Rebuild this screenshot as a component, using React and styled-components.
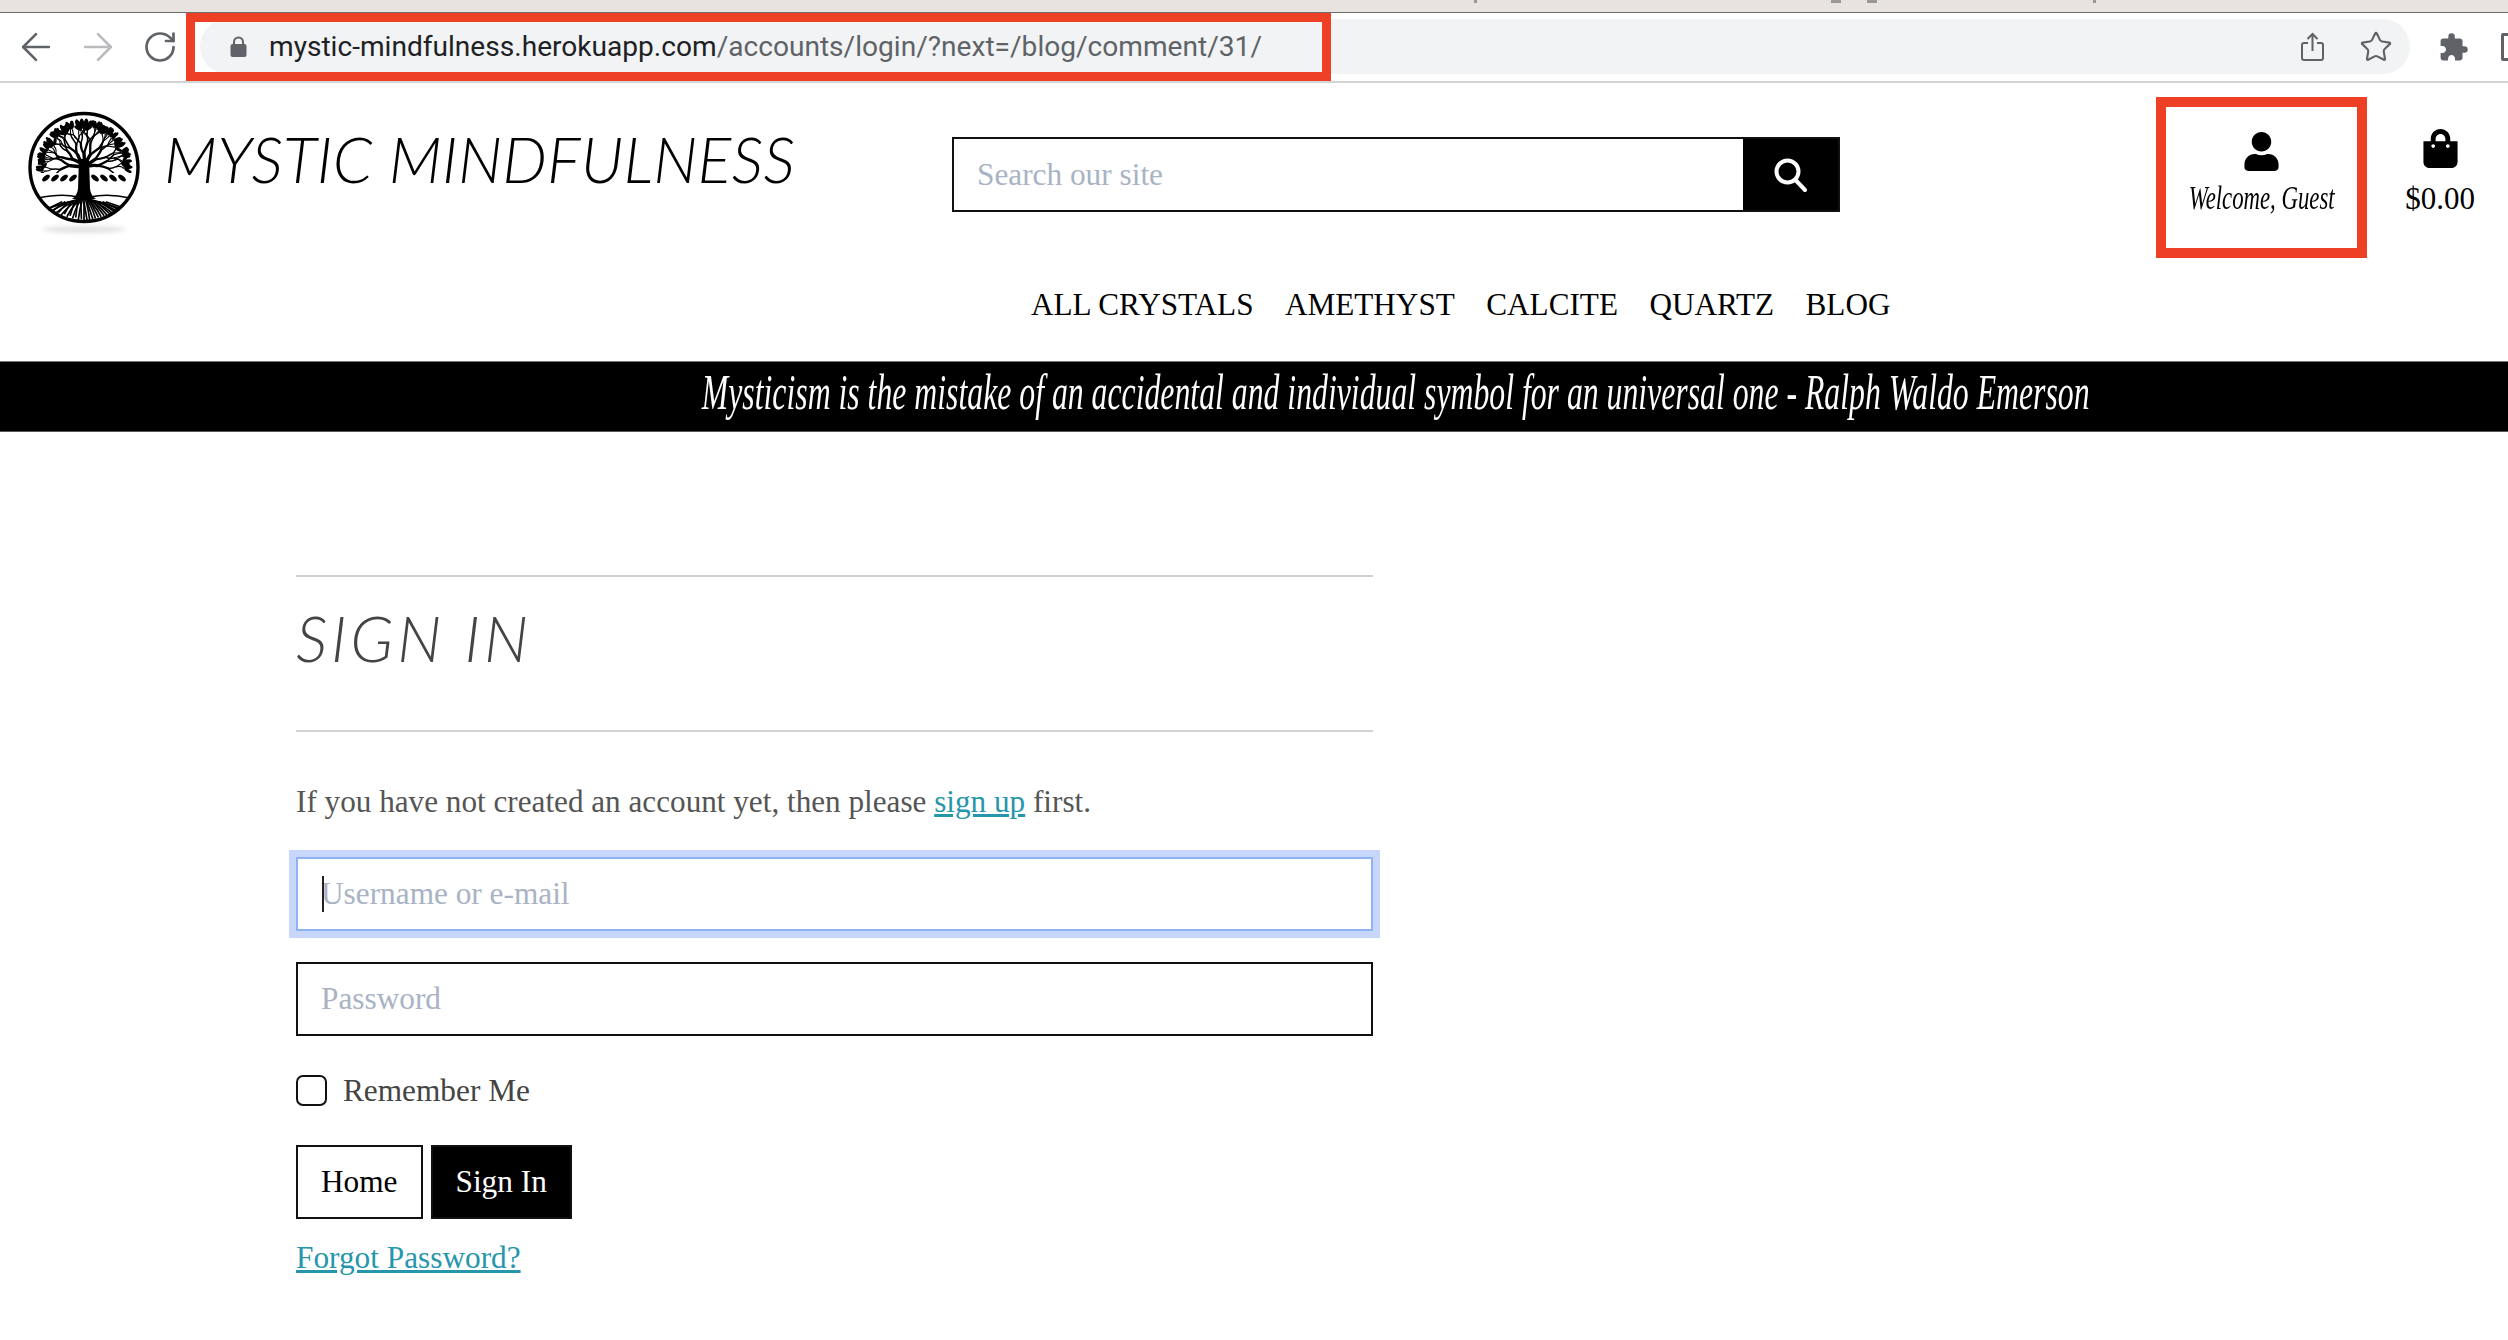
import React from 'react'
import styled, { createGlobalStyle } from 'styled-components'
import { ArrowLeft, ArrowRight, RotateCw, Star } from 'lucide-react'
import { FaShoppingBag, FaUser } from 'react-icons/fa'
import { MdExtension } from 'react-icons/md'

const RED = '#ee4024'
const SERIF = '"Liberation Serif", "Times New Roman", serif'

const GlobalStyle = createGlobalStyle`
  html, body {
    margin: 0;
    padding: 0;
    background: #fff;
    overflow: hidden;
  }

  * {
    box-sizing: border-box;
  }

  input::placeholder {
    color: #a8b3c4;
    opacity: 1;
  }
`

const Page = styled.div`
  width: 2508px;
  height: 1340px;
  overflow: hidden;
  font-family: ${SERIF};
  color: #000;
`

const TabStrip = styled.div`
  display: flex;
  height: 13px;
  background: #e7e4df;
  border-bottom: 1px solid #6f6e6a;
`

// the only thing left of the page title above the crop is a few descenders
const TitleScrap = styled.span`
  width: ${props => props.$width}px;
  height: 3px;
  margin-left: ${props => props.$left}px;
  background: #9a9894;
`

const Toolbar = styled.div`
  position: relative;
  display: flex;
  align-items: center;
  height: 70px;
  padding-left: 22px;
  background: #fff;
  border-bottom: 2px solid #d4d4d4;
`

const NavIcons = styled.div`
  display: flex;
  align-items: center;
  gap: 34px;
  width: 178px;
  flex-shrink: 0;
`

const NavIcon = styled.span`
  display: flex;
  justify-content: center;
  width: 28px;
  color: ${props => (props.$disabled ? '#b8babd' : '#5f6368')};

  svg {
    flex-shrink: 0;
  }
`

const Omnibox = styled.div`
  display: flex;
  align-items: center;
  width: 2210px;
  height: 55px;
  flex-shrink: 0;
  margin-bottom: 1px;
  padding: 0 17px 0 30px;
  background: #f1f3f4;
  border-radius: 28px;
`

const LockIcon = styled.svg`
  width: 17px;
  height: 21px;
  margin-right: 22px;
  flex-shrink: 0;
`

const Url = styled.div`
  flex: 1;
  font: 28.1px 'Roboto', sans-serif;
  color: #5f6368;
  white-space: nowrap;
`

const UrlHost = styled.span`
  color: #202124;
`

const OmniAction = styled.span`
  display: flex;
  margin-left: 35px;
  color: #5f6368;
`

const UrlHighlight = styled.div`
  position: absolute;
  top: 0;
  left: 186px;
  width: 1145px;
  height: 68px;
  border: 9px solid ${RED};
  pointer-events: none;
`

const Extensions = styled.span`
  display: flex;
  flex-shrink: 0;
  margin-left: 28px;
  color: #5f6368;
`

const SidePanelIcon = styled.span`
  width: 16px;
  height: 28px;
  margin-left: 32px;
  flex-shrink: 0;
  border: 3px solid #5f6368;
  border-radius: 2px;
`

const Header = styled.header`
  display: flex;
  height: 181px;
`

const Brand = styled.a`
  display: flex;
  align-items: flex-start;
  width: 952px;
  padding: 28px 0 0 28px;
  color: #000;
`

const LogoWrap = styled.div`
  position: relative;
  width: 112px;
  height: 113px;
  flex-shrink: 0;

  &::after {
    content: '';
    position: absolute;
    left: 14px;
    right: 14px;
    bottom: -9px;
    height: 7px;
    border-radius: 50%;
    background: #e2e2e2;
    filter: blur(2px);
  }
`

const BrandName = styled.div`
  margin: 15px 0 0 24px;
  font-family: 'Lato', sans-serif;
  font-style: italic;
  font-weight: 300;
  font-size: 63px;
  line-height: 66px;
  letter-spacing: 0.25px;
  white-space: nowrap;
`

const SearchForm = styled.form`
  display: flex;
  width: 888px;
  height: 75px;
  margin-top: 54px;
  border: 2px solid #111;
`

const SearchInput = styled.input`
  flex: 1;
  min-width: 0;
  padding: 0 23px;
  border: 0;
  outline: 0;
  font: 31.3px ${SERIF};
`

const SearchButton = styled.button`
  display: flex;
  align-items: center;
  justify-content: center;
  width: 95px;
  padding: 0;
  border: 0;
  background: #000;
  color: #fff;
`

const AccountBox = styled.div`
  display: flex;
  flex-direction: column;
  align-items: center;
  width: 211px;
  height: 161px;
  margin: 14px 0 0 316px;
  padding-top: 25px;
  border: 10px solid ${RED};
`

const AccountLabel = styled.div`
  margin-top: 8px;
  font-style: italic;
  font-size: 33px;
  line-height: 38px;
  white-space: nowrap;
  transform: scaleX(0.69);
`

const Cart = styled.div`
  display: flex;
  flex: 1;
  flex-direction: column;
  align-items: center;
  padding: 46px 0 0 5px;
`

const CartTotal = styled.div`
  margin-top: 13px;
  font-size: 31px;
  line-height: 36px;
`

const Nav = styled.nav`
  display: flex;
  gap: 31.5px;
  height: 97px;
  padding: 20px 0 0 1031px;
`

const NavLink = styled.a`
  font-size: 31.2px;
  line-height: 42px;
  color: #000;
  white-space: nowrap;
`

const Banner = styled.div`
  display: flex;
  justify-content: center;
  height: 71px;
  padding: 0 0 0 284px;
  background: #000;
  border-top: 1px solid #777;
  border-bottom: 1px solid #555;
  overflow: hidden;
`

const Quote = styled.div`
  font-style: italic;
  font-size: 50px;
  line-height: 60px;
  color: #fff;
  white-space: nowrap;
  transform: scaleX(0.635);
`

const Main = styled.main`
  width: 1077px;
  margin: 143px 0 0 296px;
`

const Rule = styled.hr`
  height: 2px;
  margin: 0;
  border: 0;
  background: #d2d2d2;
`

const Title = styled.h1`
  height: 153px;
  margin: 0;
  padding-top: 25px;
  font-family: 'Lato', sans-serif;
  font-style: italic;
  font-weight: 300;
  font-size: 63px;
  line-height: 72px;
  letter-spacing: 3.7px;
  color: #444;
`

const Intro = styled.p`
  margin: 51px 0 0;
  font-size: 31.2px;
  line-height: 38px;
  color: #555;
`

const TextLink = styled.a`
  color: #2596ab;
  text-decoration: underline;
`

const Field = styled.div`
  position: relative;
  margin-top: ${props => props.$top}px;
`

const TextInput = styled.input`
  display: block;
  width: 100%;
  height: 74px;
  padding: 0 23px;
  border: 2px solid ${props => (props.$focused ? '#8fb2f5' : '#111')};
  border-radius: 0;
  outline: 0;
  box-shadow: ${props => (props.$focused ? '0 0 0 7px #c9d6fb' : 'none')};
  font: 31.3px ${SERIF};
`

const Caret = styled.span`
  position: absolute;
  top: 19px;
  left: 26px;
  width: 1.5px;
  height: 36px;
  background: #222;
`

const RememberRow = styled.label`
  display: flex;
  align-items: center;
  gap: 16px;
  margin-top: 39px;
  font-size: 31.3px;
  line-height: 31px;
  color: #444;
`

const CheckBox = styled.span`
  width: 31px;
  height: 31px;
  border: 2px solid #111;
  border-radius: 7px;
`

const Actions = styled.div`
  display: flex;
  gap: 8px;
  margin-top: 39px;
`

const ActionButton = styled.button`
  height: 74px;
  padding: 0 23px;
  border: 2px solid #111;
  border-radius: 0;
  background: ${props => (props.$primary ? '#000' : '#fff')};
  color: ${props => (props.$primary ? '#fff' : '#000')};
  font: 31.3px ${SERIF};
`

const ForgotRow = styled.div`
  margin-top: 20px;
  font-size: 31.3px;
  line-height: 38px;
`

// deterministic branching, so the crown looks hand cut but never changes between renders
const buildCrown = () => {
  const branches = []
  const leaves = []

  const grow = (x, y, angle, length, width, depth, seed) => {
    const x2 = x + Math.cos(angle) * length
    const y2 = y + Math.sin(angle) * length
    const bend = ((seed * 7) % 5 - 2) * 0.8
    branches.push({
      d: `M${x} ${y}Q${(x + x2) / 2 + bend} ${(y + y2) / 2 - bend} ${x2} ${y2}`,
      width,
    })
    if (depth === 0) {
      leaves.push({ x: x2, y: y2, angle: (angle * 180) / Math.PI })
      return
    }
    const spread = 0.3 + ((seed * 3) % 4) * 0.05
    grow(x2, y2, angle - spread, length * 0.8, width * 0.68, depth - 1, seed + 1)
    grow(x2, y2, angle + spread, length * 0.8, width * 0.68, depth - 1, seed + 2)
  }

  const limbs = [-3.05, -2.55, -2.05, -1.57, -1.1, -0.6, -0.1]
  limbs.forEach((angle, i) => {
    grow(56, 56, angle, 13.5, 3.4, 4, i + 1)
  })

  return { branches, leaves }
}

const buildRoots = () => {
  const roots = []
  for (let i = -7; i <= 7; i += 1) {
    const endX = 56 + i * 5.6
    const endY = 110 - Math.abs(i) * 1.6
    roots.push(`M56 ${86 + Math.abs(i) * 0.2}Q${56 + i * 3.2} ${90 + Math.abs(i) * 0.3} ${endX} ${endY}`)
    roots.push(`M${56 + i * 3.2} ${91}L${endX + 3} ${endY - 1}`)
  }
  return roots
}

const crown = buildCrown()
const roots = buildRoots()
const lowerLeaves = [18, 27, 36, 45, 67, 76, 85, 94]

const TreeLogo = () => (
  <svg width="112" height="113" viewBox="0 0 112 113">
    <defs>
      <clipPath id="logo-circle">
        <circle cx="56" cy="56.5" r="54" />
      </clipPath>
      <clipPath id="logo-crown">
        <rect x="0" y="0" width="112" height="62" />
      </clipPath>
    </defs>
    <g clipPath="url(#logo-circle)" fill="none" stroke="#000" strokeLinecap="round">
      <g clipPath="url(#logo-crown)">
        {crown.branches.map(branch => (
          <path key={branch.d} d={branch.d} strokeWidth={branch.width} />
        ))}
        {crown.leaves.map(leaf => (
          <ellipse
            key={`${leaf.x}-${leaf.y}`}
            cx={leaf.x}
            cy={leaf.y}
            rx="4"
            ry="1.6"
            fill="#000"
            stroke="none"
            transform={`rotate(${leaf.angle} ${leaf.x} ${leaf.y})`}
          />
        ))}
      </g>
      {lowerLeaves.map(x => (
        <ellipse
          key={x}
          cx={x}
          cy="67"
          rx="4.5"
          ry="2.4"
          fill="#000"
          stroke="none"
          transform={`rotate(${x < 56 ? -40 : 40} ${x} 67)`}
        />
      ))}
      {roots.map(d => (
        <path key={d} d={d} strokeWidth="1.7" />
      ))}
      <path d="M10 87Q34 82 50 86L62 86Q80 82 102 87" strokeWidth="1.6" />
    </g>
    <path d="M51 48L50 78Q49 85 44 88L68 88Q63 85 62 78L61 48Z" fill="#000" />
    <circle cx="56" cy="56.5" r="54" fill="none" stroke="#000" strokeWidth="3.4" />
  </svg>
)

const ShareIcon = () => (
  <svg width="23" height="29" viewBox="0 0 23 29" fill="none" stroke="currentColor" strokeWidth="2">
    <path d="M7 11H3Q1 11 1 13V26Q1 28 3 28H20Q22 28 22 26V13Q22 11 20 11H16" />
    <path d="M11.5 19V2M6.5 7L11.5 2L16.5 7" />
  </svg>
)

const SearchGlyph = () => (
  <svg width="33" height="34" viewBox="0 0 33 34" fill="none" stroke="currentColor" strokeWidth="4" strokeLinecap="round">
    <circle cx="13.5" cy="13.5" r="11" />
    <path d="M21.500 22L31 32" />
  </svg>
)

const App = () => (
  <Page>
    <GlobalStyle />
    <TabStrip>
      <TitleScrap $left={1474} $width={3} />
      <TitleScrap $left={354} $width={10} />
      <TitleScrap $left={26} $width={10} />
      <TitleScrap $left={216} $width={3} />
    </TabStrip>
    <Toolbar>
      <NavIcons>
        <NavIcon>
          <ArrowLeft size={44} strokeWidth={1.4} />
        </NavIcon>
        <NavIcon $disabled>
          <ArrowRight size={44} strokeWidth={1.4} />
        </NavIcon>
        <NavIcon>
          <RotateCw size={36} strokeWidth={1.8} />
        </NavIcon>
      </NavIcons>
      <Omnibox>
        <LockIcon viewBox="0 0 17 21">
          <path d="M4 9V6a4.500 4.500 0 0 1 9 0v3" fill="none" stroke="#5f6368" strokeWidth="2" />
          <rect x="0.5" y="8" width="16" height="13" rx="2" fill="#5f6368" />
        </LockIcon>
        <Url>
          <UrlHost>mystic-mindfulness.herokuapp.com</UrlHost>
          /accounts/login/?next=/blog/comment/31/
        </Url>
        <OmniAction>
          <ShareIcon />
        </OmniAction>
        <OmniAction>
          <Star size={34} strokeWidth={1.5} />
        </OmniAction>
      </Omnibox>
      <Extensions>
        <MdExtension size={31} />
      </Extensions>
      <SidePanelIcon />
      <UrlHighlight />
    </Toolbar>

    <Header>
      <Brand>
        <LogoWrap>
          <TreeLogo />
        </LogoWrap>
        <BrandName>MYSTIC MINDFULNESS</BrandName>
      </Brand>
      <SearchForm>
        <SearchInput placeholder="Search our site" />
        <SearchButton type="button" aria-label="Search">
          <SearchGlyph />
        </SearchButton>
      </SearchForm>
      <AccountBox>
        <FaUser size={39} />
        <AccountLabel>Welcome, Guest</AccountLabel>
      </AccountBox>
      <Cart>
        <FaShoppingBag size={39} />
        <CartTotal>$0.00</CartTotal>
      </Cart>
    </Header>

    <Nav>
      <NavLink>ALL CRYSTALS</NavLink>
      <NavLink>AMETHYST</NavLink>
      <NavLink>CALCITE</NavLink>
      <NavLink>QUARTZ</NavLink>
      <NavLink>BLOG</NavLink>
    </Nav>

    <Banner>
      <Quote>Mysticism is the mistake of an accidental and individual symbol for an universal one - Ralph Waldo Emerson</Quote>
    </Banner>

    <Main>
      <Rule />
      <Title>SIGN IN</Title>
      <Rule />
      <Intro>
        If you have not created an account yet, then please <TextLink>sign up</TextLink> first.
      </Intro>
      <Field $top={36}>
        <TextInput $focused placeholder="Username or e-mail" />
        <Caret />
      </Field>
      <Field $top={31}>
        <TextInput placeholder="Password" />
      </Field>
      <RememberRow>
        <CheckBox />
        Remember Me
      </RememberRow>
      <Actions>
        <ActionButton type="button">Home</ActionButton>
        <ActionButton type="button" $primary>
          Sign In
        </ActionButton>
      </Actions>
      <ForgotRow>
        <TextLink>Forgot Password?</TextLink>
      </ForgotRow>
    </Main>
  </Page>
)

export default App
